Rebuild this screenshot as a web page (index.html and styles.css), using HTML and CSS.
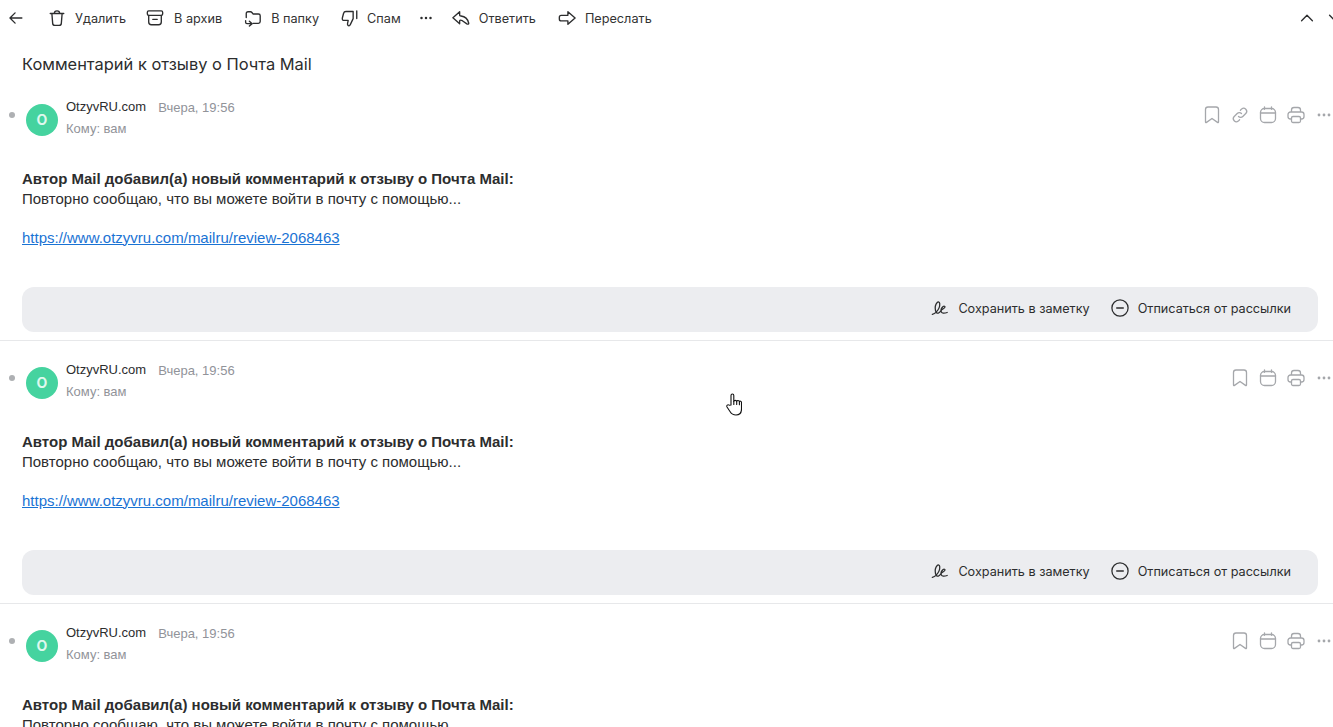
FILE: index.html
```html
<!DOCTYPE html>
<html lang="ru">
<head>
<meta charset="utf-8">
<title>Комментарий к отзыву о Почта Mail</title>
<link rel="stylesheet" href="styles.css">
</head>
<body>
<svg class="sprite" width="0" height="0">
  <defs>
    <symbol id="i-book" viewBox="0 0 20 20"><path d="M3.500 4.500C3.500 2.800 4.300 2 6 2h8c1.700 0 2.500.8 2.500 2.500V17c0 .6-.5.8-1 .4L10 13.500l-5.500 3.900c-.5.400-1 .2-1-.4z"/></symbol>
    <symbol id="i-link" viewBox="0 0 20 20"><path d="M8.500 11.500a3 3 0 0 0 4.300 0l3.200-3.200a3.100 3.100 0 0 0-4.300-4.400l-1.300 1.300M11.500 8.500a3 3 0 0 0-4.300 0L4 11.700a3.100 3.100 0 0 0 4.300 4.400l1.300-1.300"/></symbol>
    <symbol id="i-cal" viewBox="0 0 20 20"><rect x="2.500" y="3.500" width="15" height="14" rx="4"/><path d="M2.500 8h15M6.500 1.800v2.500M13.500 1.800v2.500"/></symbol>
    <symbol id="i-print" viewBox="0 0 20 20"><path d="M5.500 14H4.500a2.500 2.500 0 0 1-2.500-2.500v-2A2.500 2.500 0 0 1 4.500 7h11A2.500 2.500 0 0 1 18 9.500v2a2.500 2.500 0 0 1-2.500 2.500h-1M5.500 7V5c0-1.700.8-2.500 2.500-2.500h4c1.700 0 2.500.8 2.500 2.500v2"/><rect x="5.500" y="11.500" width="9" height="6" rx="1.500"/></symbol>
    <symbol id="i-dots" viewBox="0 0 20 20"><circle cx="5" cy="10" r="1.400"/><circle cx="10" cy="10" r="1.400"/><circle cx="15" cy="10" r="1.400"/></symbol>
    <symbol id="i-sign" viewBox="0 0 20 20"><path d="M1.500 17c1.500-.2 3-1 4.300-2.400C8 12.300 10 8.500 9.700 5.200 9.500 3.300 8 2.800 6.900 3.900 5 5.800 4.400 10 5 13c.4 2 1.700 3 3.200 2.600 1.700-.4 2.600-2.200 3.600-3.500.9-1 3.300-1.500 3.700-3 .3-1.100-1.100-1.400-2-.7-1.500 1.200-2.700 4-2.200 5.700.5 1.900 3.200 2.100 6.700.9"/></symbol>
    <symbol id="i-minus" viewBox="0 0 20 20"><circle cx="10" cy="10" r="9"/><path d="M6.300 10h7.400"/></symbol>
  </defs>
</svg>

<header class="toolbar">
  <button class="tool tool-back" aria-label="Назад">
    <svg class="ic" viewBox="0 0 20 20"><path d="M16.500 10h-13M9 4.300 3.300 10 9 15.700"/></svg>
  </button>
  <button class="tool tool-delete">
    <svg class="ic" viewBox="0 0 20 20"><path d="M2.500 5h15M7 5c0-2 .8-3 3-3s3 1 3 3M4.300 5l.9 11c.1 1.400 1 2.200 2.400 2.200h4.800c1.400 0 2.300-.8 2.400-2.200L15.700 5"/></svg>
    <span>Удалить</span>
  </button>
  <button class="tool tool-archive">
    <svg class="ic" viewBox="0 0 20 20"><rect x="1.500" y="2" width="17" height="5" rx="1.500"/><path d="M3 7v7.500c0 2 1 3 3 3h8c2 0 3-1 3-3V7M7.500 11.500h5"/></svg>
    <span>В архив</span>
  </button>
  <button class="tool tool-folder">
    <svg class="ic" viewBox="0 0 20 20"><path d="M2.500 9.500V5c0-1.300.7-2 2-2h2.700c.8 0 1.100.3 1.600.9L10 5.500h6c1.300 0 2 .7 2 2V14c0 1.300-.7 2-2 2h-6"/><path d="M1.800 13v1.800c0 1 .5 1.500 1.500 1.500H9M6 13.500l3 2.800-3 2.700"/></svg>
    <span>В папку</span>
  </button>
  <button class="tool tool-spam">
    <svg class="ic" viewBox="0 0 20 20"><path d="M13.500 2.800H5.500C4 2.800 3.200 3.500 2.800 5L1.500 10c-.4 1.700.4 2.700 2 2.700H8l-.7 3.300c-.3 1.500.5 2.700 1.600 2.700.6 0 1-.4 1.300-1.100l3.300-6.900z"/><path d="M17.500 2v8.500"/></svg>
    <span>Спам</span>
  </button>
  <button class="tool tool-more" aria-label="Ещё">
    <svg class="ic ic-fill"><use href="#i-dots"/></svg>
  </button>
  <button class="tool tool-reply">
    <svg class="ic" viewBox="0 0 20 20"><path d="M8.500 3 1 9.800l7.500 6.700v-3.500c.3-.6 1.600-.6 3 0l5 3.500c1.300.8 2.300.2 2-.9-.8-3.800-4-7.300-8.500-7.800-.8-.1-1.500-.3-1.500-.9z"/></svg>
    <span>Ответить</span>
  </button>
  <button class="tool tool-forward">
    <svg class="ic" viewBox="0 0 20 20"><path d="M11 3l8 7-8 7v-3.800H3.500C2.200 13.200 1.500 12.500 1.500 11V9.200C1.500 7.700 2.200 7 3.500 7H11z"/></svg>
    <span>Переслать</span>
  </button>
  <div class="tool-nav">
    <svg class="ic" viewBox="0 0 20 20"><path d="M4 13l6-6 6 6"/></svg>
    <svg class="ic" viewBox="0 0 20 20"><path d="M4 7l6 6 6-6"/></svg>
  </div>
</header>

<h1 class="subject">Комментарий к отзыву о Почта Mail</h1>

<main class="thread">
  <article class="letter">
    <div class="meta">
      <span class="dot"></span>
      <div class="avatar"><span>O</span></div>
      <div class="who">
        <div class="who-top"><span class="sender">OtzyvRU.com</span><span class="date">Вчера, 19:56</span></div>
        <div class="to">Кому: вам</div>
      </div>
      <div class="actions">
        <svg class="act"><use href="#i-book"/></svg>
        <svg class="act"><use href="#i-link"/></svg>
        <svg class="act"><use href="#i-cal"/></svg>
        <svg class="act"><use href="#i-print"/></svg>
        <svg class="act act-fill"><use href="#i-dots"/></svg>
      </div>
    </div>
    <div class="body">
      <b>Автор Mail добавил(а) новый комментарий к отзыву о Почта Mail:</b><br>
      Повторно сообщаю, что вы можете войти в почту с помощью...<br><br>
      <a href="#">https://www.otzyvru.com/mailru/review-2068463</a>
    </div>
    <div class="bar">
      <span class="bar-item"><svg class="ic-bar"><use href="#i-sign"/></svg>Сохранить в заметку</span>
      <span class="bar-item"><svg class="ic-bar"><use href="#i-minus"/></svg>Отписаться от рассылки</span>
    </div>
  </article>

  <article class="letter">
    <div class="meta">
      <span class="dot"></span>
      <div class="avatar"><span>O</span></div>
      <div class="who">
        <div class="who-top"><span class="sender">OtzyvRU.com</span><span class="date">Вчера, 19:56</span></div>
        <div class="to">Кому: вам</div>
      </div>
      <div class="actions">
        <svg class="act"><use href="#i-book"/></svg>
        <svg class="act"><use href="#i-cal"/></svg>
        <svg class="act"><use href="#i-print"/></svg>
        <svg class="act act-fill"><use href="#i-dots"/></svg>
      </div>
    </div>
    <div class="body">
      <b>Автор Mail добавил(а) новый комментарий к отзыву о Почта Mail:</b><br>
      Повторно сообщаю, что вы можете войти в почту с помощью...<br><br>
      <a href="#">https://www.otzyvru.com/mailru/review-2068463</a>
    </div>
    <div class="bar">
      <span class="bar-item"><svg class="ic-bar"><use href="#i-sign"/></svg>Сохранить в заметку</span>
      <span class="bar-item"><svg class="ic-bar"><use href="#i-minus"/></svg>Отписаться от рассылки</span>
    </div>
  </article>

  <article class="letter">
    <div class="meta">
      <span class="dot"></span>
      <div class="avatar"><span>O</span></div>
      <div class="who">
        <div class="who-top"><span class="sender">OtzyvRU.com</span><span class="date">Вчера, 19:56</span></div>
        <div class="to">Кому: вам</div>
      </div>
      <div class="actions">
        <svg class="act"><use href="#i-book"/></svg>
        <svg class="act"><use href="#i-cal"/></svg>
        <svg class="act"><use href="#i-print"/></svg>
        <svg class="act act-fill"><use href="#i-dots"/></svg>
      </div>
    </div>
    <div class="body">
      <b>Автор Mail добавил(а) новый комментарий к отзыву о Почта Mail:</b><br>
      Повторно сообщаю, что вы можете войти в почту с помощью...<br><br>
      <a href="#">https://www.otzyvru.com/mailru/review-2068463</a>
    </div>
  </article>
</main>

<svg class="cursor" viewBox="0 0 16 24"><path d="M5 13V3.500C5 1.500 7.800 1.500 7.800 3.500V9.500c.2-1.500 2.700-1.500 2.900 0 .2-1.300 2.500-1.300 2.700.2.300-.9 2.100-.7 2.100.8V17c0 3.500-2 6-5.500 6-3 0-4.500-1-6-3.500L1 15c-.8-1.500.8-3 2.200-1.800z"/><path d="M7.800 9.500v3M10.700 9.500v3M13.400 9.700v3"/></svg>
</body>
</html>
```

FILE: styles.css
```css
* { box-sizing: border-box; }

html, body {
  margin: 0;
  height: 727px;
  overflow: hidden;
  background: #fff;
}

body {
  position: relative;
  font-family: "Inter", "Liberation Sans", sans-serif;
  color: #2c2d2e;
}

.sprite { position: absolute; }

.toolbar {
  display: flex;
  align-items: center;
  height: 36px;
  padding-left: 7px;
  font-size: 12.700px;
}

.tool {
  display: flex;
  align-items: center;
  gap: 9px;
  padding: 0;
  border: 0;
  background: none;
  font: inherit;
  color: #333;
}

.ic {
  width: 18px;
  height: 18px;
  flex: none;
  fill: none;
  stroke: #2c2d2e;
  stroke-width: 1.500;
  stroke-linecap: round;
  stroke-linejoin: round;
}

.ic-fill { fill: #2c2d2e; stroke: none; }

.tool-delete { margin-left: 23px; }
.tool-archive { margin-left: 20px; gap: 10px; }
.tool-folder { margin-left: 22px; }
.tool-spam { margin-left: 22px; gap: 8px; }
.tool-more { margin-left: 16px; }
.tool-reply { margin-left: 17px; }
.tool-forward { margin-left: 22px; }

.tool-nav {
  display: flex;
  gap: 10px;
  margin-left: auto;
  margin-right: -11px;
}

.subject {
  margin: 18px 0 0 22px;
  font-size: 16.450px;
  line-height: 20px;
  font-weight: 400;
  color: #2c2d2e;
}

.thread { margin-top: 4px; }

.letter {
  height: 263px;
  padding: 0 15px 0 9px;
  border-bottom: 1px solid #e7e8ea;
}

.meta {
  display: flex;
  align-items: flex-start;
  padding-top: 19px;
}

.dot {
  width: 6px;
  height: 6px;
  margin-top: 15px;
  border-radius: 50%;
  background: #aeb0b3;
}

.avatar {
  display: flex;
  align-items: center;
  justify-content: center;
  width: 32px;
  height: 32px;
  margin: 7px 0 0 11px;
  border-radius: 50%;
  background: #45d39f;
}

.avatar span {
  font: 700 14px/1 "Inter", sans-serif;
  color: #dff8ee;
}

.who { margin: 0 0 0 8px; }

.who-top {
  display: flex;
  align-items: flex-start;
  gap: 12px;
  height: 22px;
}

.sender {
  font: 13px/20px "Liberation Sans", sans-serif;
  color: #2c2d2e;
}

.date, .to {
  font: 13px/20px "Liberation Sans", sans-serif;
  color: #919399;
}

.date { margin-top: 1px; }

.actions {
  display: flex;
  gap: 8px;
  margin-left: auto;
  margin-top: 8px;
  margin-right: -16px;
}

.act {
  width: 20px;
  height: 20px;
  fill: none;
  stroke: #a5a7ab;
  stroke-width: 1.300;
  stroke-linecap: round;
  stroke-linejoin: round;
}

.act-fill { fill: #a5a7ab; stroke: none; }

.body {
  margin: 30px 0 0 13px;
  font: 15px/19.500px "Liberation Sans", sans-serif;
  color: #2c2d2e;
}

.body a { color: #1a73d4; }

.bar {
  display: flex;
  justify-content: flex-end;
  align-items: center;
  gap: 21px;
  height: 45px;
  margin: 40px 0 0 13px;
  padding: 0 27px 3px 0;
  border-radius: 12px;
  background: #ecedf0;
  font-size: 12.650px;
  color: #2c2d2e;
}

.bar-item {
  display: flex;
  align-items: center;
  gap: 9px;
}

.ic-bar {
  width: 18px;
  height: 18px;
  fill: none;
  stroke: #2c2d2e;
  stroke-width: 1.400;
  stroke-linecap: round;
  stroke-linejoin: round;
}

.cursor {
  position: absolute;
  left: 726px;
  top: 392px;
  width: 16px;
  height: 24px;
  fill: #fff;
  stroke: #111;
  stroke-width: 1.100;
  stroke-linejoin: round;
  stroke-linecap: round;
}
```
